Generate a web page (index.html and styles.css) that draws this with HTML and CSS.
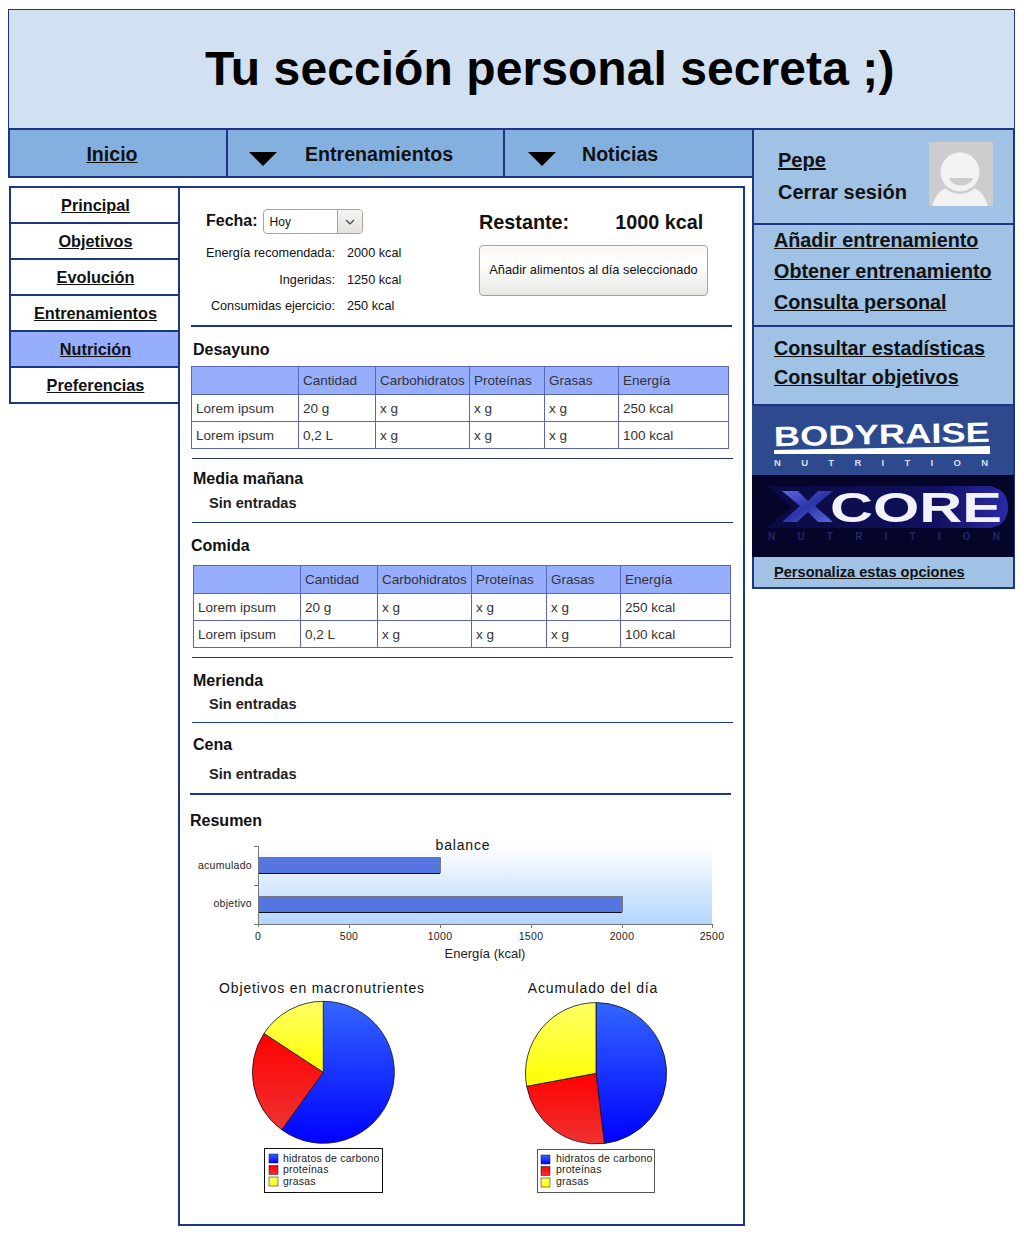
FILE: index.html
```html
<!DOCTYPE html>
<html lang="es">
<head>
  <meta charset="UTF-8">
  <meta name="viewport" content="width=device-width, initial-scale=1.0">
  <title>Tu sección personal secreta</title>
  <link rel="stylesheet" href="styles.css">
</head>
<body>
  <div class="page">
    <header class="banner">
      <h1>Tu sección personal secreta ;)</h1>
    </header>

    <div class="layout">
      <div class="left-col">
        <nav class="topnav">
          <a class="topnav-item topnav-home" href="#">Inicio</a>
          <div class="topnav-item topnav-news-a"><span class="arrow"></span><span>Entrenamientos</span></div>
          <div class="topnav-item topnav-news-b"><span class="arrow"></span><span>Noticias</span></div>
        </nav>

        <div class="body-row">
          <ul class="sidemenu">
            <li><a href="#">Principal</a></li>
            <li><a href="#">Objetivos</a></li>
            <li><a href="#">Evolución</a></li>
            <li><a href="#">Entrenamientos</a></li>
            <li class="active"><a href="#">Nutrición</a></li>
            <li><a href="#">Preferencias</a></li>
          </ul>

          <main class="content">
            <section class="summary">
              <div class="summary-left">
                <div class="date-row">
                  <span class="date-label">Fecha:</span>
                  <div class="select">
                    <span class="select-value">Hoy</span>
                    <span class="select-btn">
                      <svg width="10" height="6" viewBox="0 0 10 6"><path d="M1 1 L5 5 L9 1" fill="none" stroke="#444" stroke-width="1.2"/></svg>
                    </span>
                  </div>
                </div>
                <div class="energy-row"><span class="energy-label">Energía recomendada:</span><span>2000 kcal</span></div>
                <div class="energy-row"><span class="energy-label">Ingeridas:</span><span>1250 kcal</span></div>
                <div class="energy-row"><span class="energy-label">Consumidas ejercicio:</span><span>250 kcal</span></div>
              </div>
              <div class="summary-right">
                <div class="remaining"><span>Restante:</span><span class="remaining-value">1000 kcal</span></div>
                <button class="add-btn" type="button">Añadir alimentos al día seleccionado</button>
              </div>
            </section>
            <hr class="rule-thick">

            <h3 class="meal meal-desayuno">Desayuno</h3>
            <table class="food-table table-desayuno">
              <tr><th></th><th>Cantidad</th><th>Carbohidratos</th><th>Proteínas</th><th>Grasas</th><th>Energía</th></tr>
              <tr><td>Lorem ipsum</td><td>20 g</td><td>x g</td><td>x g</td><td>x g</td><td>250 kcal</td></tr>
              <tr><td>Lorem ipsum</td><td>0,2 L</td><td>x g</td><td>x g</td><td>x g</td><td>100 kcal</td></tr>
            </table>
            <hr class="rule rule-1">

            <h3 class="meal meal-media">Media mañana</h3>
            <p class="empty empty-media">Sin entradas</p>
            <hr class="rule rule-2">

            <h3 class="meal meal-comida">Comida</h3>
            <table class="food-table table-comida">
              <tr><th></th><th>Cantidad</th><th>Carbohidratos</th><th>Proteínas</th><th>Grasas</th><th>Energía</th></tr>
              <tr><td>Lorem ipsum</td><td>20 g</td><td>x g</td><td>x g</td><td>x g</td><td>250 kcal</td></tr>
              <tr><td>Lorem ipsum</td><td>0,2 L</td><td>x g</td><td>x g</td><td>x g</td><td>100 kcal</td></tr>
            </table>
            <hr class="rule rule-3">

            <h3 class="meal meal-merienda">Merienda</h3>
            <p class="empty empty-merienda">Sin entradas</p>
            <hr class="rule rule-4">

            <h3 class="meal meal-cena">Cena</h3>
            <p class="empty empty-cena">Sin entradas</p>
            <hr class="rule-thick rule-5">

            <h3 class="meal meal-resumen">Resumen</h3>

            <!-- viewBox values are page coordinates -->
            <svg class="bar-chart" width="545" height="130" viewBox="190 835 545 130">
              <defs>
                <linearGradient id="plot-bg" x1="0" y1="0" x2="0" y2="1">
                  <stop offset="0" stop-color="#ffffff"/>
                  <stop offset="1" stop-color="#b3d6ff"/>
                </linearGradient>
              </defs>
              <rect x="258" y="846" width="454" height="78" fill="url(#plot-bg)"/>
              <rect x="258.5" y="857.5" width="182" height="16" fill="#5576e0"/>
              <path d="M258 857.5 H440.5 V873" fill="none" stroke="#777"/>
              <path d="M258 873.5 H440" stroke="#111"/>
              <rect x="258.5" y="896.5" width="364" height="16" fill="#5576e0"/>
              <path d="M258 896.5 H622.5 V912" fill="none" stroke="#777"/>
              <path d="M258 912.5 H622" stroke="#111"/>
              <path d="M258.5 846 V927 M254 846.5 H258 M254 885.5 H258 M254 924.5 H712.5 M349.5 924 V928 M440.5 924 V928 M531.5 924 V928 M622.5 924 V928 M712.5 924 V928" fill="none" stroke="#777"/>
              <text class="chart-title" x="463" y="850" text-anchor="middle">balance</text>
              <text class="tick" x="252" y="869" text-anchor="end">acumulado</text>
              <text class="tick" x="252" y="907" text-anchor="end">objetivo</text>
              <text class="tick" x="258" y="940" text-anchor="middle">0</text>
              <text class="tick" x="349" y="940" text-anchor="middle">500</text>
              <text class="tick" x="440" y="940" text-anchor="middle">1000</text>
              <text class="tick" x="531" y="940" text-anchor="middle">1500</text>
              <text class="tick" x="622" y="940" text-anchor="middle">2000</text>
              <text class="tick" x="712" y="940" text-anchor="middle">2500</text>
              <text class="axis-label" x="485" y="958" text-anchor="middle">Energía (kcal)</text>
            </svg>

            <div class="pies">
              <svg class="pie" width="273" height="235" viewBox="190 970 273 235">
                <defs>
                  <linearGradient id="blue" x1="0" y1="0" x2="0" y2="1"><stop offset="0" stop-color="#3366ff"/><stop offset="1" stop-color="#0000ff"/></linearGradient>
                  <linearGradient id="red" x1="0" y1="0" x2="0" y2="1"><stop offset="0" stop-color="#ff0000"/><stop offset="1" stop-color="#ee3333"/></linearGradient>
                  <linearGradient id="yellow" x1="0" y1="0" x2="0" y2="1"><stop offset="0" stop-color="#ffff66"/><stop offset="1" stop-color="#ffff00"/></linearGradient>
                </defs>
                <text class="chart-title" x="322" y="993" text-anchor="middle">Objetivos en macronutrientes</text>
                <path d="M323.3 1072.3 V1001.3 A71 71 0 1 1 281.7 1129.8 Z" fill="url(#blue)" stroke="#111" stroke-width="0.8"/>
                <path d="M323.3 1072.3 L281.7 1129.8 A71 71 0 0 1 264 1033.4 Z" fill="url(#red)" stroke="#111" stroke-width="0.8"/>
                <path d="M323.3 1072.3 L264 1033.4 A71 71 0 0 1 323.3 1001.3 Z" fill="url(#yellow)" stroke="#111" stroke-width="0.8"/>
                <rect x="264.5" y="1148.5" width="118" height="44" fill="#fff" stroke="#111"/>
                <rect x="269" y="1154" width="9" height="9" fill="url(#blue)" stroke="#111" stroke-width="0.5"/>
                <rect x="269" y="1165.5" width="9" height="9" fill="url(#red)" stroke="#111" stroke-width="0.5"/>
                <rect x="269" y="1177" width="9" height="9" fill="url(#yellow)" stroke="#111" stroke-width="0.5"/>
                <text class="legend" x="283" y="1162">hidratos de carbono</text>
                <text class="legend" x="283" y="1173">proteínas</text>
                <text class="legend" x="283" y="1185">grasas</text>
              </svg>
              <svg class="pie" width="270" height="235" viewBox="463 970 270 235">
                <text class="chart-title" x="593" y="993" text-anchor="middle">Acumulado del día</text>
                <path d="M596 1073.3 V1002.6 A70.7 70.7 0 0 1 604.3 1143.5 Z" fill="url(#blue)" stroke="#111" stroke-width="0.8"/>
                <path d="M596 1073.3 L604.3 1143.5 A70.7 70.7 0 0 1 526.7 1086.3 Z" fill="url(#red)" stroke="#111" stroke-width="0.8"/>
                <path d="M596 1073.3 L526.7 1086.3 A70.7 70.7 0 0 1 596 1002.6 Z" fill="url(#yellow)" stroke="#111" stroke-width="0.8"/>
                <rect x="537.5" y="1149.5" width="117" height="43" fill="#fff" stroke="#555"/>
                <rect x="541" y="1155" width="9" height="9" fill="url(#blue)" stroke="#111" stroke-width="0.5"/>
                <rect x="541" y="1166.5" width="9" height="9" fill="url(#red)" stroke="#111" stroke-width="0.5"/>
                <rect x="541" y="1178" width="9" height="9" fill="url(#yellow)" stroke="#111" stroke-width="0.5"/>
                <text class="legend" x="556" y="1162">hidratos de carbono</text>
                <text class="legend" x="556" y="1173">proteínas</text>
                <text class="legend" x="556" y="1185">grasas</text>
              </svg>
            </div>
          </main>
        </div>
      </div>

      <aside class="sidebar">
        <div class="user-box">
          <div class="user-links">
            <a href="#">Pepe</a>
            <span>Cerrar sesión</span>
          </div>
          <svg class="avatar" width="64" height="64" viewBox="0 0 64 64">
            <rect width="64" height="64" fill="#cdcdcd"/>
            <ellipse cx="31" cy="68" rx="28" ry="26" fill="#f2f2f2"/>
            <circle cx="31" cy="30" r="22" fill="#cdcdcd"/>
            <circle cx="31" cy="30" r="19.5" fill="#f2f2f2"/>
            <path d="M20 36 H44 C41 46 23 46 20 36 Z" fill="#cdcdcd"/>
          </svg>
        </div>
        <div class="side-links side-links-a">
          <a href="#">Añadir entrenamiento</a>
          <a href="#">Obtener entrenamiento</a>
          <a href="#">Consulta personal</a>
        </div>
        <div class="side-links side-links-b">
          <a href="#">Consultar estadísticas</a>
          <a href="#">Consultar objetivos</a>
        </div>
        <svg class="logo logo-bodyraise" width="261" height="69" viewBox="752 406 261 69">
          <g transform="rotate(-1.2 882 444)">
            <text class="logo-big" x="774" y="444" textLength="216" lengthAdjust="spacingAndGlyphs" font-size="28">BODYRAISE</text>
          </g>
          <path d="M774 450 L990 446 V454 L774 454 Z" fill="#fff"/>
          <text class="logo-small" x="774" y="466" textLength="214" font-size="9.5">NUTRITION</text>
        </svg>
        <svg class="logo logo-xcore" width="262" height="82" viewBox="752 475 262 82">
          <defs>
            <linearGradient id="x-fill" x1="0" y1="0" x2="1" y2="1"><stop offset="0" stop-color="#5a68e0"/><stop offset="0.5" stop-color="#2b34a8"/><stop offset="1" stop-color="#5a68e0"/></linearGradient>
            <linearGradient id="pill" x1="0" y1="0" x2="1" y2="0"><stop offset="0" stop-color="#0a0a42"/><stop offset="0.7" stop-color="#10105e"/><stop offset="1" stop-color="#2a2aa6"/></linearGradient>
          </defs>
          <rect x="752" y="475" width="262" height="82" fill="#05052a"/>
          <path d="M766 486 H990 Q1008 490 1008 507 Q1008 525 990 528 H766 L792 507 Z" fill="url(#pill)"/>
          <path d="M782 491 H798 L808 501 L818 491 H833 L815 506 L833 522 H818 L808 512 L797 522 H782 L800 506 Z" fill="url(#x-fill)"/>
          <text class="logo-big" x="830" y="522" textLength="172" lengthAdjust="spacingAndGlyphs" font-size="43">CORE</text>
          <text class="logo-small logo-small-dim" x="768" y="540" textLength="232" font-size="10">NUTRITION</text>
        </svg>
        <div class="customize"><a href="#">Personaliza estas opciones</a></div>
      </aside>
    </div>
  </div>
</body>
</html>
```
FILE: styles.css
```css
* {
  box-sizing: border-box;
}
body {
  margin: 0;
  font-family: "Liberation Sans", Arial, sans-serif;
  background: #fff;
  color: #111;
}
a {
  color: #111;
}
.page {
  padding: 9px 9px 24px 8px;
}
.banner {
  height: 120px;
  background: #d2e1f2;
  border: 1px solid #1e3685;
  border-bottom: none;
  padding: 30px 0 0 196px;
}
.banner h1 {
  margin: 0;
  font-size: 48px;
  line-height: 58px;
  letter-spacing: 0.07px;
  font-weight: bold;
  color: #000;
}
.layout {
  display: flex;
  align-items: flex-start;
  margin-top: -1px;
}
.left-col {
  width: 744px;
}
.topnav {
  display: flex;
  height: 50px;
  background: #84b0df;
  border: 2px solid #1e3685;
  border-right: none;
  font-size: 19.6px;
  font-weight: bold;
}
.topnav-item {
  display: flex;
  align-items: center;
  padding-top: 2px;
  line-height: 46px;
}
.topnav-home {
  width: 218px;
  justify-content: center;
  padding-right: 12px;
  border-right: 2px solid #1e3685;
}
.topnav-news-a {
  width: 277px;
  padding-left: 21px;
  border-right: 2px solid #1e3685;
}
.topnav-news-b {
  flex: 1;
  padding-left: 23px;
}
.arrow {
  width: 0;
  height: 0;
  margin: 9px 28px 0 0;
  border-left: 14px solid transparent;
  border-right: 14px solid transparent;
  border-top: 14px solid #000;
}
.topnav-news-b .arrow {
  margin-right: 26px;
}
.body-row {
  display: flex;
  align-items: flex-start;
  margin-top: 8px;
  padding-left: 1px;
}
.sidemenu {
  width: 171px;
  margin: 0;
  padding: 0;
  list-style: none;
  border: 2px solid #1e3685;
  border-right: none;
}
.sidemenu li {
  height: 36px;
  line-height: 34px;
  text-align: center;
  font-size: 16.3px;
  font-weight: bold;
  border-bottom: 2px solid #1e3685;
}
.sidemenu li:last-child {
  height: 34px;
  border-bottom: none;
}
.sidemenu .active {
  background: #97aefc;
}
.content {
  width: 567px;
  height: 1040px;
  margin-left: -2px;
  border: 2px solid #1e3685;
}
.summary {
  display: flex;
  height: 137px;
}
.summary-left {
  width: 299px;
  padding-top: 21px;
}
.date-row {
  display: flex;
  align-items: center;
  height: 25px;
  margin: 0 0 6px 26px;
  gap: 5px;
}
.date-label {
  padding-bottom: 2px;
  font-size: 16px;
  font-weight: bold;
}
.select {
  display: flex;
  width: 100px;
  height: 25px;
  border: 1px solid #aaa496;
  border-radius: 4px;
  font-size: 12px;
  font-weight: normal;
}
.select-value {
  flex: 1;
  padding-left: 6px;
  line-height: 24px;
}
.select-btn {
  display: flex;
  align-items: center;
  justify-content: center;
  width: 25px;
  border-left: 1px solid #aaa496;
  border-radius: 0 3px 3px 0;
  background: linear-gradient(#f6f5f2, #e4e2dc);
}
.energy-row {
  display: grid;
  grid-template-columns: 155px 1fr;
  column-gap: 12px;
  height: 26.5px;
  line-height: 26px;
  font-size: 12.7px;
}
.energy-label {
  text-align: right;
}
.summary-right {
  padding-top: 22px;
}
.remaining {
  display: flex;
  height: 35px;
  line-height: 24px;
  font-size: 19.8px;
  font-weight: bold;
}
.remaining-value {
  margin-left: 46px;
}
.add-btn {
  display: block;
  width: 229px;
  height: 51px;
  padding: 0 0 2px;
  border: 1px solid #aaa496;
  border-radius: 4px;
  background: linear-gradient(#f9f8f6, #ffffff 35%, #e8e8e6);
  color: #111;
  font-family: inherit;
  font-size: 12.8px;
}
hr {
  margin: 0;
  border: none;
}
.rule-thick {
  width: 541px;
  height: 2px;
  margin-left: 11px;
  background: #1e3685;
}
.rule {
  width: 541px;
  height: 1px;
  margin-left: 12px;
  background: #1e3685;
}
.meal {
  margin: 0;
  font-size: 16px;
  line-height: 20px;
  font-weight: bold;
}
.meal-desayuno {
  margin: 13px 0 6px 13px;
}
.food-table {
  width: 538px;
  border-collapse: collapse;
  table-layout: fixed;
  font-size: 13.5px;
  color: #333;
}
.food-table th,
.food-table td {
  height: 27px;
  padding: 0 4px;
  border: 1px solid #5a66b4;
  font-weight: normal;
  text-align: left;
  white-space: nowrap;
  overflow: hidden;
}
.food-table th {
  height: 28px;
  background: #97aefc;
}
.food-table th:nth-child(1) { width: 107px; }
.food-table th:nth-child(2) { width: 77px; }
.food-table th:nth-child(3) { width: 94px; }
.food-table th:nth-child(4) { width: 75px; }
.food-table th:nth-child(5) { width: 74px; }
.table-desayuno {
  margin-left: 11px;
}
.table-comida {
  margin-left: 13px;
}
.rule-1 {
  margin-top: 9px;
}
.meal-media {
  margin: 10px 0 0 13px;
}
.empty {
  margin: 0 0 0 29px;
  font-size: 14.6px;
  line-height: 18px;
  font-weight: bold;
  color: #222;
}
.empty-media {
  margin-top: 5px;
}
.rule-2 {
  margin-top: 10px;
}
.meal-comida {
  margin: 13px 0 9px 11px;
}
.rule-3 {
  margin-top: 9px;
}
.meal-merienda {
  margin: 13px 0 0 13px;
}
.empty-merienda {
  margin-top: 4px;
}
.rule-4 {
  margin-top: 9px;
}
.meal-cena {
  margin: 12px 0 0 13px;
}
.empty-cena {
  margin-top: 10px;
}
.rule-5 {
  margin-top: 10px;
  margin-left: 10px;
}
.meal-resumen {
  margin: 16px 0 4px 10px;
}
.bar-chart {
  display: block;
  margin-left: 10px;
}
.pies {
  display: flex;
  margin: 5px 0 0 10px;
}
.pie {
  display: block;
}
.chart-title {
  font-size: 14px;
  letter-spacing: 0.85px;
  fill: #111;
}
.tick {
  font-size: 10.5px;
  letter-spacing: 0.3px;
  fill: #222;
}
.axis-label {
  font-size: 13px;
  fill: #222;
}
.legend {
  font-size: 10.5px;
  letter-spacing: 0.2px;
  fill: #222;
}
.sidebar {
  width: 263px;
  border: 2px solid #1e3685;
  background: #9fc2e5;
}
.user-box {
  display: flex;
  justify-content: space-between;
  height: 95px;
  padding: 12px 20px 0 24px;
  border-bottom: 2px solid #1e3685;
  font-size: 20px;
  font-weight: bold;
}
.user-links {
  display: flex;
  flex-direction: column;
  padding-top: 7px;
  gap: 9px;
  line-height: 23px;
}
.avatar {
  display: block;
}
.side-links {
  display: flex;
  flex-direction: column;
  padding-left: 20px;
  font-size: 19.8px;
  font-weight: bold;
  border-bottom: 2px solid #1e3685;
}
.side-links-a {
  height: 102px;
  gap: 8px;
  padding-top: 4px;
  line-height: 23px;
}
.side-links-b {
  height: 79px;
  gap: 6px;
  padding-top: 10px;
  line-height: 23px;
}
.logo {
  display: block;
  margin-left: -2px;
}
.logo-bodyraise {
  background: #2d4a8e;
}
.logo-big {
  font-family: "Liberation Sans", Arial, sans-serif;
  font-weight: bold;
  fill: #fff;
}
.logo-xcore .logo-big {
  fill: #f2f2ff;
}
.logo-small {
  font-family: "Liberation Sans", Arial, sans-serif;
  font-weight: bold;
  fill: #d8deea;
}
.logo-small-dim {
  fill: #1c2a66;
}
.customize {
  height: 30px;
  padding-left: 20px;
  line-height: 31px;
  font-size: 14.6px;
  font-weight: bold;
}
```
